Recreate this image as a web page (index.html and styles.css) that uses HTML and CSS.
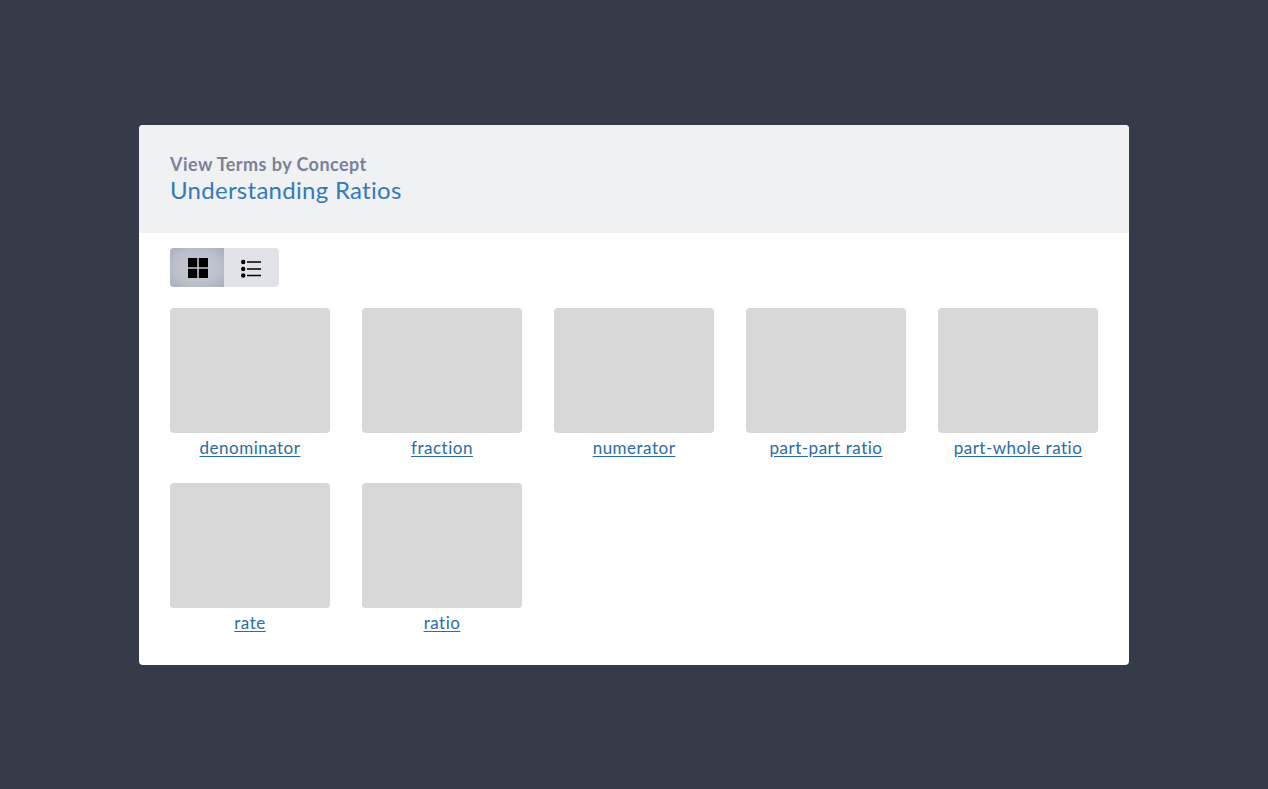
FILE: index.html
```html
<!DOCTYPE html>
<html lang="en">
<head>
<meta charset="utf-8">
<title>View Terms by Concept</title>
<link rel="stylesheet" href="styles.css">
</head>
<body>
<main class="modal">
  <header class="modal-header">
    <div class="eyebrow">View Terms by Concept</div>
    <h1 class="title">Understanding Ratios</h1>
  </header>
  <section class="modal-body">
    <div class="toggle">
      <button class="toggle-btn toggle-btn-active" type="button" aria-label="Grid view">
        <svg width="20" height="20" viewBox="0 0 20 20"><path d="M0 0h9.200v9.200H0zM10.800 0H20v9.200h-9.200zM0 10.800h9.200V20H0zM10.800 10.800H20V20h-9.200z" fill="#000"/></svg>
      </button>
      <button class="toggle-btn toggle-btn-list" type="button" aria-label="List view">
        <svg width="20" height="20" viewBox="0 0 20 20"><circle cx="2.200" cy="4" r="2.200"/><circle cx="2.200" cy="11" r="2.200"/><circle cx="2.200" cy="17.500" r="2.200"/><path d="M6 4h14M6 11h14M6 17.500h14" stroke="#000" stroke-width="1.400" fill="none"/></svg>
      </button>
    </div>
    <div class="grid">
      <div class="term"><div class="thumb"></div><a class="term-link" href="#">denominator</a></div>
      <div class="term"><div class="thumb"></div><a class="term-link" href="#">fraction</a></div>
      <div class="term"><div class="thumb"></div><a class="term-link" href="#">numerator</a></div>
      <div class="term"><div class="thumb"></div><a class="term-link" href="#">part-part ratio</a></div>
      <div class="term"><div class="thumb"></div><a class="term-link" href="#">part-whole ratio</a></div>
      <div class="term"><div class="thumb"></div><a class="term-link" href="#">rate</a></div>
      <div class="term"><div class="thumb"></div><a class="term-link" href="#">ratio</a></div>
    </div>
  </section>
</main>
</body>
</html>
```
FILE: styles.css
```css
* { box-sizing: border-box; }
html, body { height: 100%; }
body {
  margin: 0;
  background: #363b49;
  font-family: Lato, "Liberation Sans", sans-serif;
  display: flex;
  justify-content: center;
  align-items: center;
  padding-top: 1px;
}
.modal {
  width: 990px;
  height: 540px;
  background: #fff;
  border-radius: 4px;
  overflow: hidden;
}
.modal-header {
  height: 108px;
  background: #f0f1f3;
  padding: 28px 31px 0;
}
.eyebrow {
  font-size: 18px;
  line-height: 23px;
  font-weight: 700;
  letter-spacing: 0.45px;
  color: #7a8299;
}
.title {
  margin: 0;
  font-size: 24px;
  line-height: 28px;
  font-weight: 400;
  letter-spacing: 0.28px;
  color: #327ab9;
}
.modal-body { padding: 15px 31px 0; }
.toggle {
  display: flex;
  width: 109px;
  height: 39px;
  border-radius: 4px;
  overflow: hidden;
  background: #e1e3e9;
}
.toggle-btn {
  border: 0;
  background: transparent;
  display: flex;
  align-items: center;
  justify-content: center;
}
.toggle-btn-active {
  flex: 0 0 54px;
  padding: 1px 0 0 2px;
  background: radial-gradient(ellipse at center, #c6c9d4 0%, #bcc0cb 60%, #a9adba 100%);
}
.toggle-btn-list {
  flex: 1 1 0;
  padding: 1px 1px 0 0;
}
.grid {
  display: grid;
  grid-template-columns: repeat(5, 160px);
  column-gap: 32px;
  row-gap: 15px;
  margin-top: 21px;
}
.term {
  display: flex;
  flex-direction: column;
  align-items: center;
}
.thumb {
  width: 160px;
  height: 125px;
  background: #d8d8d8;
  border-radius: 4px;
}
.term-link {
  font-size: 17px;
  line-height: 30px;
  height: 35px;
  letter-spacing: 0.5px;
  color: #2b6ca3;
  text-decoration: underline;
  text-underline-offset: 2px;
}
```
